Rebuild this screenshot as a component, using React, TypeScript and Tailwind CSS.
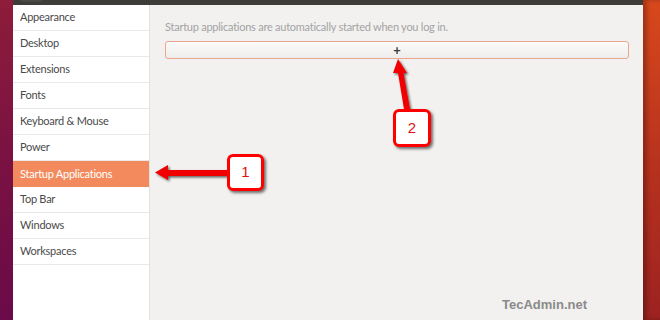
import React from "react";

const items = [
  "Appearance",
  "Desktop",
  "Extensions",
  "Fonts",
  "Keyboard & Mouse",
  "Power",
  "Startup Applications",
  "Top Bar",
  "Windows",
  "Workspaces",
];

export default function App() {
  return (
    <div
      className="relative flex h-[320px] w-[660px] overflow-hidden"
      style={{ fontFamily: 'Lato, "Noto Sans", sans-serif' }}
    >
      {/* desktop left */}
      <div className="w-[13px] shrink-0 bg-gradient-to-b from-[#8e1c3a] via-[#7a1142] to-[#6a0a48]" />
      {/* window */}
      <div className="flex w-[630px] shrink-0 flex-col">
        <div className="flex h-[5px] shrink-0 bg-[#3d3c38]">
          <div className="ml-[7px] h-[2px] w-[22px] rounded-b-[2px] bg-[#4a4945]" />
        </div>
        <div className="flex flex-1">
          <div className="flex w-[137px] shrink-0 flex-col border-r border-[#e2e1df] bg-white">
            {items.map((it) => {
              const active = it === "Startup Applications";
              return (
                <div
                  key={it}
                  className={
                    active
                      ? "flex h-[26px] items-center bg-[#f28a5d] pl-[7px] text-[11px] tracking-[-0.25px] text-white"
                      : "flex h-[26px] items-center border-b border-[#e9e9e9] pl-[7px] text-[11px] tracking-[-0.25px] text-[#4a4a4a]"
                  }
                >
                  {it}
                </div>
              );
            })}
          </div>
          <div className="flex flex-1 flex-col bg-[#f2f1f0] pl-[15px] pr-[14px]">
            <div className="mt-[14px] h-[22px] text-[11px] leading-[16px] tracking-[-0.25px] text-[#a3a3a3]">
              Startup applications are automatically started when you log in.
            </div>
            <div className="flex h-[18px] items-center justify-center rounded-[3px] border border-[#eaa68f] bg-gradient-to-b from-[#fbfbfa] to-[#eeedeb] text-[13px] font-bold leading-none text-[#3a3a3a]">
              +
            </div>
            <div className="mt-auto mb-[6px] flex justify-end pr-[42px]">
              <span
                className="text-[13px] font-bold text-[#8a8a8a]"
                style={{ fontFamily: '"Liberation Sans", Arial, sans-serif' }}
              >
                TecAdmin.net
              </span>
            </div>
          </div>
        </div>
      </div>
      {/* desktop right */}
      <div className="flex-1 bg-gradient-to-b from-[#d8481c] via-[#b8331e] to-[#9c2220] shadow-[inset_4px_0_4px_rgba(0,0,0,0.25)]" />

      {/* annotations */}
      <svg className="absolute left-0 top-0" width="660" height="320">
        <defs>
          <filter id="sh" x="-20%" y="-20%" width="140%" height="140%">
            <feDropShadow dx="1.5" dy="1.5" stdDeviation="1" floodColor="#000" floodOpacity="0.6" />
          </filter>
        </defs>
        <g filter="url(#sh)" fill="#f00000">
          <polygon points="155,172.5 168,165 168,170 229,170 229,176 168,176 168,180" />
          <polygon points="398,59 407,73 403.5,73 410,109 404,109 398,73 393,73" />
        </g>
      </svg>
      <div className="absolute left-[227px] top-[154px] flex h-[37px] w-[37px] items-center justify-center rounded-[6px] border-[3px] border-[#ff0000] bg-white text-[15px] text-[#e01010] shadow-[2px_2px_3px_rgba(0,0,0,0.55)]"
        style={{ fontFamily: '"Liberation Sans", Arial, sans-serif' }}>
        1
      </div>
      <div className="absolute left-[393px] top-[109px] flex h-[38px] w-[38px] items-center justify-center rounded-[6px] border-[3px] border-[#ff0000] bg-white text-[15px] text-[#e01010] shadow-[2px_2px_3px_rgba(0,0,0,0.55)]"
        style={{ fontFamily: '"Liberation Sans", Arial, sans-serif' }}>
        2
      </div>
    </div>
  );
}
